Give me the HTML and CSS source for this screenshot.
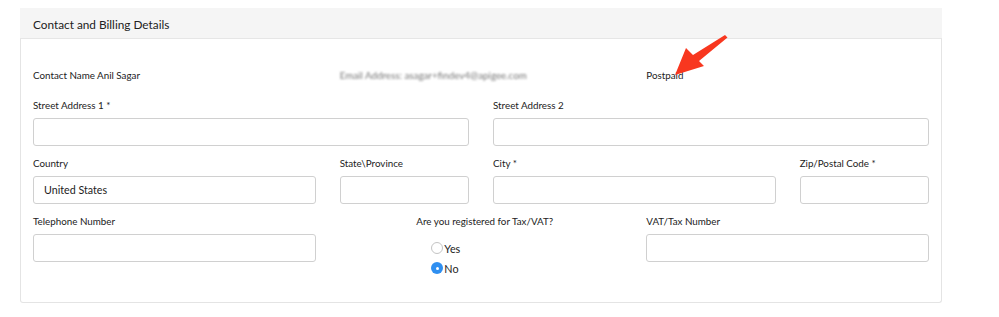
FILE: index.html
```html
<!DOCTYPE html>
<html lang="en">
<head>
<meta charset="utf-8">
<title>Contact and Billing Details</title>
<link rel="stylesheet" href="styles.css">
</head>
<body>
<div class="page">
  <section class="panel">
    <header class="panel-head">Contact and Billing Details</header>
    <div class="panel-body">
      <div class="grid">
        <div class="info c4">Contact Name Anil Sagar</div>
        <div class="info c4 blurred">Email Address: asagar+findev4@apigee.com</div>
        <div class="info c4">Postpaid</div>

        <div class="field c6">
          <label class="lbl">Street Address 1 *</label>
          <div class="input"></div>
        </div>
        <div class="field c6">
          <label class="lbl">Street Address 2</label>
          <div class="input"></div>
        </div>

        <div class="field c4">
          <label class="lbl">Country</label>
          <div class="input">United States</div>
        </div>
        <div class="field c2">
          <label class="lbl">State\Province</label>
          <div class="input"></div>
        </div>
        <div class="field c4">
          <label class="lbl">City *</label>
          <div class="input"></div>
        </div>
        <div class="field c2">
          <label class="lbl">Zip/Postal Code *</label>
          <div class="input"></div>
        </div>

        <div class="field c4">
          <label class="lbl">Telephone Number</label>
          <div class="input"></div>
        </div>
        <div class="field off1">
          <label class="lbl">Are you registered for Tax/VAT?</label>
          <div class="radios">
            <div class="radio"><span class="dot"></span>Yes</div>
            <div class="radio"><span class="dot on"></span>No</div>
          </div>
        </div>
        <div class="field c4">
          <label class="lbl">VAT/Tax Number</label>
          <div class="input"></div>
        </div>
      </div>
    </div>
  </section>
  <svg class="arrow" width="70" height="50" viewBox="0 0 70 50" aria-hidden="true">
    <polygon points="62,1 64.5,3.5 36,27 41,32 12,41 23,14 30,21" fill="#f8371f"/>
  </svg>
</div>
</body>
</html>
```

FILE: styles.css
```css
html, body {
  margin: 0;
  padding: 0;
  background: #ffffff;
}

body {
  font-family: "Lato", "Open Sans", "Liberation Sans", sans-serif;
  color: #222222;
}

.page {
  position: relative;
  padding: 8px 0 0 20px;
}

.panel {
  width: 920px;
  border: 1px solid #e4e4e4;
  border-top: none;
  border-radius: 0 0 3px 3px;
}

.panel-head {
  background: #f5f5f5;
  margin: 0 -1px 0 -1px;
  height: 27px;
  line-height: 27px;
  padding: 3px 13px 0 13px;
  font-size: 11.8px;
  color: #222222;
  border-bottom: 1px solid #e6e6e6;
}

.panel-body {
  padding: 29px 12px 24px 12px;
}

.grid {
  display: grid;
  grid-template-columns: repeat(12, 1fr);
  column-gap: 24px;
  row-gap: 10px;
  align-items: start;
}

.c2 { grid-column: span 2; }
.c4 { grid-column: span 4; }
.c6 { grid-column: span 6; }
.off1 { grid-column: 6 / span 3; }

.info {
  font-size: 9.8px;
  line-height: 15px;
  margin-bottom: 5px;
}

.blurred {
  color: #777777;
  filter: blur(0.9px);
}

.lbl {
  display: block;
  font-size: 9.8px;
  line-height: 15px;
  margin-bottom: 5px;
  color: #222222;
}

.input {
  box-sizing: border-box;
  height: 28px;
  border: 1px solid #d0d0d0;
  border-radius: 3px;
  padding: 0 10px;
  font-size: 10.7px;
  line-height: 26px;
  color: #222222;
}

.radios {
  padding: 4px 0 0 15px;
}

.radio {
  display: flex;
  align-items: center;
  height: 20px;
  font-size: 10.8px;
  color: #222222;
}

.dot {
  box-sizing: border-box;
  width: 12px;
  height: 12px;
  border-radius: 50%;
  border: 1px solid #c4c4c4;
  background: #ffffff;
  margin-right: 1px;
  position: relative;
}

.dot.on {
  border: none;
  background: #2f8ff0;
}

.dot.on::after {
  content: "";
  position: absolute;
  left: 4.5px;
  top: 4.5px;
  width: 3px;
  height: 3px;
  border-radius: 50%;
  background: #ffffff;
}

.arrow {
  position: absolute;
  left: 663px;
  top: 34px;
}
```
